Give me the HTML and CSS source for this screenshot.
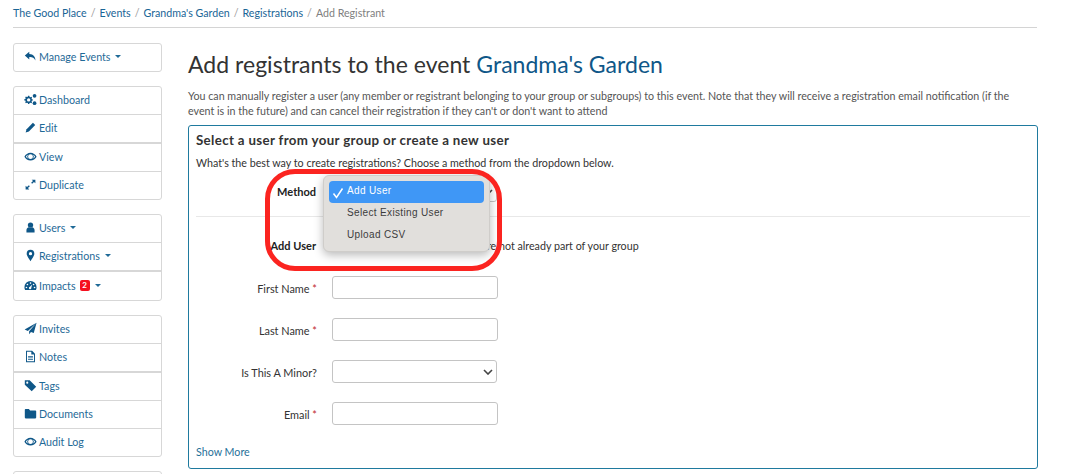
FILE: index.html
```html
<!DOCTYPE html>
<html lang="en">
<head>
<meta charset="utf-8">
<title>Add Registrant</title>
<link rel="stylesheet" href="styles.css">
</head>
<body>
<nav class="crumbs">
  <a>The Good Place</a><span class="sep">/</span><a>Events</a><span class="sep">/</span><a>Grandma's Garden</a><span class="sep">/</span><a>Registrations</a><span class="sep">/</span><span class="cur">Add Registrant</span>
</nav>
<div class="layout">
  <aside class="side">
    <ul class="group">
      <li class="item"><svg class="ic" viewBox="0 0 16 16"><path d="M6.500 2 1 6.800l5.500 4.800V8.600c3.500-.2 5.800.6 7.500 4.400.2-4.800-2.300-8-7.500-8.200z"/></svg>Manage Events<i class="caret"></i></li>
    </ul>
    <ul class="group">
      <li class="item"><svg class="ic" viewBox="0 0 16 16"><path fill-rule="evenodd" d="M5 4.500l1.300-.4.400-1.300h1.600l.4 1.300 1.300.6 1.200-.6.900 1-.6 1.200.5 1.200 1.300.4v1.400H12l-.5 1.300.6 1.200-1 1-1.200-.6-1.200.5-.4 1.300H6.700l-.4-1.300-1.300-.5-1.200.6-1-1 .6-1.200-.5-1.300L1.500 9V7.600l1.400-.4.500-1.200-.6-1.200 1-1zM7.500 6a2.300 2.300 0 1 0 0 4.600 2.300 2.300 0 0 0 0-4.600z" transform="translate(-1 1) scale(.9)"/><circle cx="13" cy="3.500" r="2.300"/><circle cx="13" cy="12.500" r="2.300"/></svg>Dashboard</li>
      <li class="item thick"><svg class="ic" viewBox="0 0 16 16"><path d="M11 2.200l2.800 2.800L6 12.800 2 14l1.200-4z"/></svg>Edit</li>
      <li class="item"><svg class="ic" viewBox="0 0 16 16"><path fill-rule="evenodd" d="M8 3.500c3.300 0 6 2.200 7.500 4.700C14 10.700 11.300 12.800 8 12.800S2 10.700.5 8.200C2 5.700 4.700 3.500 8 3.500zm0 1.700a3 3 0 1 0 0 6 3 3 0 0 0 0-6zM2.300 8.200c.7 1 1.500 1.800 2.500 2.400a4 4 0 0 1 0-4.800c-1 .6-1.800 1.400-2.500 2.400zm8.900-2.400a4 4 0 0 1 0 4.800c1-.6 1.800-1.400 2.500-2.400-.7-1-1.500-1.800-2.500-2.400z"/></svg>View</li>
      <li class="item"><svg class="ic" viewBox="0 0 16 16"><path d="M9.500 2H14v4.500l-1.700-1.700-2.300 2.300-1.200-1.200 2.300-2.300zM6.500 14H2V9.500l1.700 1.700 2.300-2.300 1.200 1.200-2.300 2.300z"/></svg>Duplicate</li>
    </ul>
    <ul class="group">
      <li class="item"><svg class="ic" viewBox="0 0 16 16"><circle cx="8" cy="5" r="3.300"/><path d="M3 14v-2.500C3 9.300 4.500 8 6 7.800c1.200.8 2.800.8 4 0 1.500.2 3 1.500 3 3.700V14z"/></svg>Users<i class="caret"></i></li>
      <li class="item thick"><svg class="ic" viewBox="0 0 16 16"><path fill-rule="evenodd" d="M8 1a4.700 4.700 0 0 1 4.700 4.700C12.700 9 9.500 12 8 15 6.500 12 3.300 9 3.300 5.700A4.700 4.700 0 0 1 8 1zm0 2.700a2 2 0 1 0 0 4 2 2 0 0 0 0-4z"/></svg>Registrations<i class="caret"></i></li>
      <li class="item tall"><svg class="ic" viewBox="0 0 16 16"><path fill-rule="evenodd" d="M8 2.500a7.500 7.500 0 0 1 7.500 7.500c0 1.300-.3 2.500-.9 3.500H1.400C.8 12.500.5 11.300.5 10A7.500 7.500 0 0 1 8 2.500zM8 4a1 1 0 1 0 0 2 1 1 0 0 0 0-2zM4.200 5.700a1 1 0 1 0 0 2 1 1 0 0 0 0-2zm7.600 0a1 1 0 1 0 0 2 1 1 0 0 0 0-2zM3 9.500a1 1 0 1 0 0 2 1 1 0 0 0 0-2zm10 0a1 1 0 1 0 0 2 1 1 0 0 0 0-2zM10 6.800 7.300 9.600a1.500 1.500 0 1 0 1.700 1.200z"/></svg>Impacts<span class="badge">2</span><i class="caret"></i></li>
    </ul>
    <ul class="group">
      <li class="item"><svg class="ic" viewBox="0 0 16 16"><path d="M15.500 1 .8 9.300l4 1.700zM15.500 1 6.300 11.500V15l2.300-2.800 3.400 1.400z"/></svg>Invites</li>
      <li class="item thick"><svg class="ic" viewBox="0 0 16 16"><path fill-rule="evenodd" d="M2.500 1H10l3.500 3.500V15h-11zM3.700 2.200v11.600h8.600V5.500H9V2.200zM5 7.300h6v1H5zm0 2h6v1H5zm0 2h6v1H5z"/></svg>Notes</li>
      <li class="item"><svg class="ic" viewBox="0 0 16 16"><path fill-rule="evenodd" d="M1 1.500h6l8 8-5.500 5.500-8.500-8zM4 3.200a1.300 1.300 0 1 0 0 2.600 1.300 1.300 0 0 0 0-2.600z"/></svg>Tags</li>
      <li class="item"><svg class="ic" viewBox="0 0 16 16"><path d="M1 3.500A1 1 0 0 1 2 2.500h4L7.500 4.300H14a1 1 0 0 1 1 1V13a1 1 0 0 1-1 1H2a1 1 0 0 1-1-1z"/></svg>Documents</li>
      <li class="item"><svg class="ic" viewBox="0 0 16 16"><path fill-rule="evenodd" d="M8 3.500c3.300 0 6 2.200 7.500 4.700C14 10.700 11.300 12.800 8 12.800S2 10.700.5 8.200C2 5.700 4.700 3.500 8 3.500zm0 1.700a3 3 0 1 0 0 6 3 3 0 0 0 0-6zM2.300 8.200c.7 1 1.500 1.800 2.500 2.400a4 4 0 0 1 0-4.800c-1 .6-1.800 1.400-2.500 2.400zm8.900-2.400a4 4 0 0 1 0 4.800c1-.6 1.800-1.400 2.500-2.400-.7-1-1.500-1.800-2.500-2.400z"/></svg>Audit Log</li>
    </ul>
    <ul class="group"><li class="item"></li></ul>
  </aside>
  <main class="main">
    <h1 class="title">Add registrants to the event <a>Grandma's Garden</a></h1>
    <p class="intro">You can manually register a user (any member or registrant belonging to your group or subgroups) to this event. Note that they will receive a registration email notification (if the event is in the future) and can cancel their registration if they can't or don't want to attend</p>
    <section class="panel">
      <h2 class="panel-title">Select a user from your group or create a new user</h2>
      <p class="panel-sub">What's the best way to create registrations? Choose a method from the dropdown below.</p>
      <div class="row method-row">
        <label class="lab strong">Method</label>
        <div class="fake-select method-select"><svg class="chev" viewBox="0 0 10 6"><path d="M1 1l4 4 4-4"/></svg></div>
      </div>
      <hr class="rule">
      <div class="row adduser-row">
        <label class="lab strong">Add User</label>
        <span class="adduser-text">Add new user to the event who are not already part of your group</span>
      </div>
      <div class="row field"><label class="lab">First Name <b class="req">*</b></label><input class="inp" type="text"></div>
      <div class="row field"><label class="lab">Last Name <b class="req">*</b></label><input class="inp" type="text"></div>
      <div class="row field"><label class="lab">Is This A Minor?</label><div class="fake-select"><svg class="chev" viewBox="0 0 10 6"><path d="M1 1l4 4 4-4"/></svg></div></div>
      <div class="row field"><label class="lab">Email <b class="req">*</b></label><input class="inp" type="text"></div>
      <a class="more">Show More</a>
    </section>
  </main>
</div>
<div class="menu">
  <div class="opt on"><svg class="check" viewBox="0 0 12 12"><path d="M1.500 6.500 4.500 10.500 10.500 1.500"/></svg>Add User</div>
  <div class="opt">Select Existing User</div>
  <div class="opt">Upload CSV</div>
</div>
<div class="callout"></div>
</body>
</html>
```

FILE: styles.css
```css
* { box-sizing: border-box; }
html, body { margin: 0; height: 474px; overflow: hidden; background: #fff; }
body { font-family: Lato, "Liberation Sans", sans-serif; font-size: 11px; color: #333; position: relative; }
a { color: #1a6596; text-decoration: none; }

.crumbs { margin: 0 34px 0 13px; height: 28px; padding-top: 7px; line-height: 12px; font-size: 10.65px; border-bottom: 1px solid #d4d4d4; white-space: nowrap; }
.sep { color: #999; margin: 0 4px; }
.cur { color: #808080; }

.layout { display: flex; height: 446px; overflow: hidden; padding: 15px 33px 0 13px; align-items: flex-start; }
.side { width: 149px; flex: none; display: flex; flex-direction: column; gap: 14px; }
.group { list-style: none; margin: 0; padding: 0; border: 1px solid #d7d7d7; border-radius: 3px; }
.item { height: 28px; display: flex; align-items: center; padding: 0 0 2px 10px; color: #1f6a97; font-size: 10.7px; border-bottom: 1px solid #d7d7d7; }
.group .item:last-child { border-bottom: 0; height: 27px; }
.item.thick { border-bottom-width: 2px; height: 29px; }
.group .item.tall { height: 28px; }
.ic { width: 13px; height: 13px; margin-right: 2px; fill: #0f5788; flex: none; }
.caret { width: 0; height: 0; margin-left: 5px; border-left: 3px solid transparent; border-right: 3px solid transparent; border-top: 3px solid #1f6a97; }
.badge { background: #f5101f; color: #fff; font-size: 8px; font-weight: 700; width: 10px; height: 11px; line-height: 11px; text-align: center; border-radius: 2px; margin-left: 4px; }

.main { flex: 1; margin-left: 26px; min-width: 0; }
.title { margin: 0; font-size: 23px; font-weight: 400; line-height: 30px; padding-top: 6px; color: #333; letter-spacing: .02px; white-space: nowrap; }
.title a { color: #0f5788; }
.intro { margin: 9px 0 0; padding-right: 10px; font-size: 10.7px; line-height: 15px; color: #555; }
.panel { margin-top: 7px; height: 344px; border: 1px solid #1f7a9e; border-radius: 3px; padding: 6px 7px 0; }
.panel-title { margin: 0; font-size: 13.300px; font-weight: 700; line-height: 16px; letter-spacing: .35px; color: #333; }
.panel-sub { margin: 8px 0 0; font-size: 10.7px; line-height: 14px; color: #333; }
.row { display: flex; align-items: center; gap: 15px; }
.lab { width: 121px; flex: none; text-align: right; font-size: 10.9px; color: #333; }
.field .lab { padding-top: 2px; }
.strong { font-weight: 700; color: #222; font-size: 11px; padding-right: 1px; }
.req { color: #c0272d; font-weight: 400; }
.method-row { margin-top: 11px; height: 21px; }
.rule { border: 0; border-top: 1px solid #e8e8e8; margin: 14px 0 0; }
.adduser-row { margin-top: 21px; height: 14px; }
.adduser-text { font-size: 10.7px; color: #333; white-space: nowrap; }
.field { height: 23px; margin-top: 19px; }
.adduser-row + .field { margin-top: 24px; }
.inp, .fake-select { width: 166px; height: 23px; border: 1px solid #c4c4c4; border-radius: 3px; background: #fff; margin: 0; padding: 0; display: flex; align-items: center; justify-content: flex-end; }
.fake-select { width: 165px; padding-right: 3px; }
.method-select { height: 21px; }
.chev { width: 10px; height: 6px; fill: none; stroke: #444; stroke-width: 1.600; }
.more { display: block; margin-top: 20px; font-size: 10.7px; line-height: 14px; color: #1f7099; }

.menu { position: absolute; left: 323px; top: 175px; width: 167px; height: 77px; padding: 5px; background: #e1dfdc; border-radius: 6px; border: 1px solid #cfcdca; box-shadow: 0 3px 10px rgba(0,0,0,.28); font-family: "Liberation Sans", sans-serif; font-size: 10px; letter-spacing: .35px; color: #3c3c3c; }
.opt { height: 22px; line-height: 19px; padding-left: 18px; position: relative; }
.opt.on { background: #3f97f6; color: #fff; border-radius: 4px; }
.check { position: absolute; left: 3px; top: 6px; width: 12px; height: 12px; fill: none; stroke: #fff; stroke-width: 1.500; }
.callout { position: absolute; left: 265px; top: 169px; width: 237px; height: 102px; border: 5px solid #fb2420; border-radius: 30px; pointer-events: none; }
```
